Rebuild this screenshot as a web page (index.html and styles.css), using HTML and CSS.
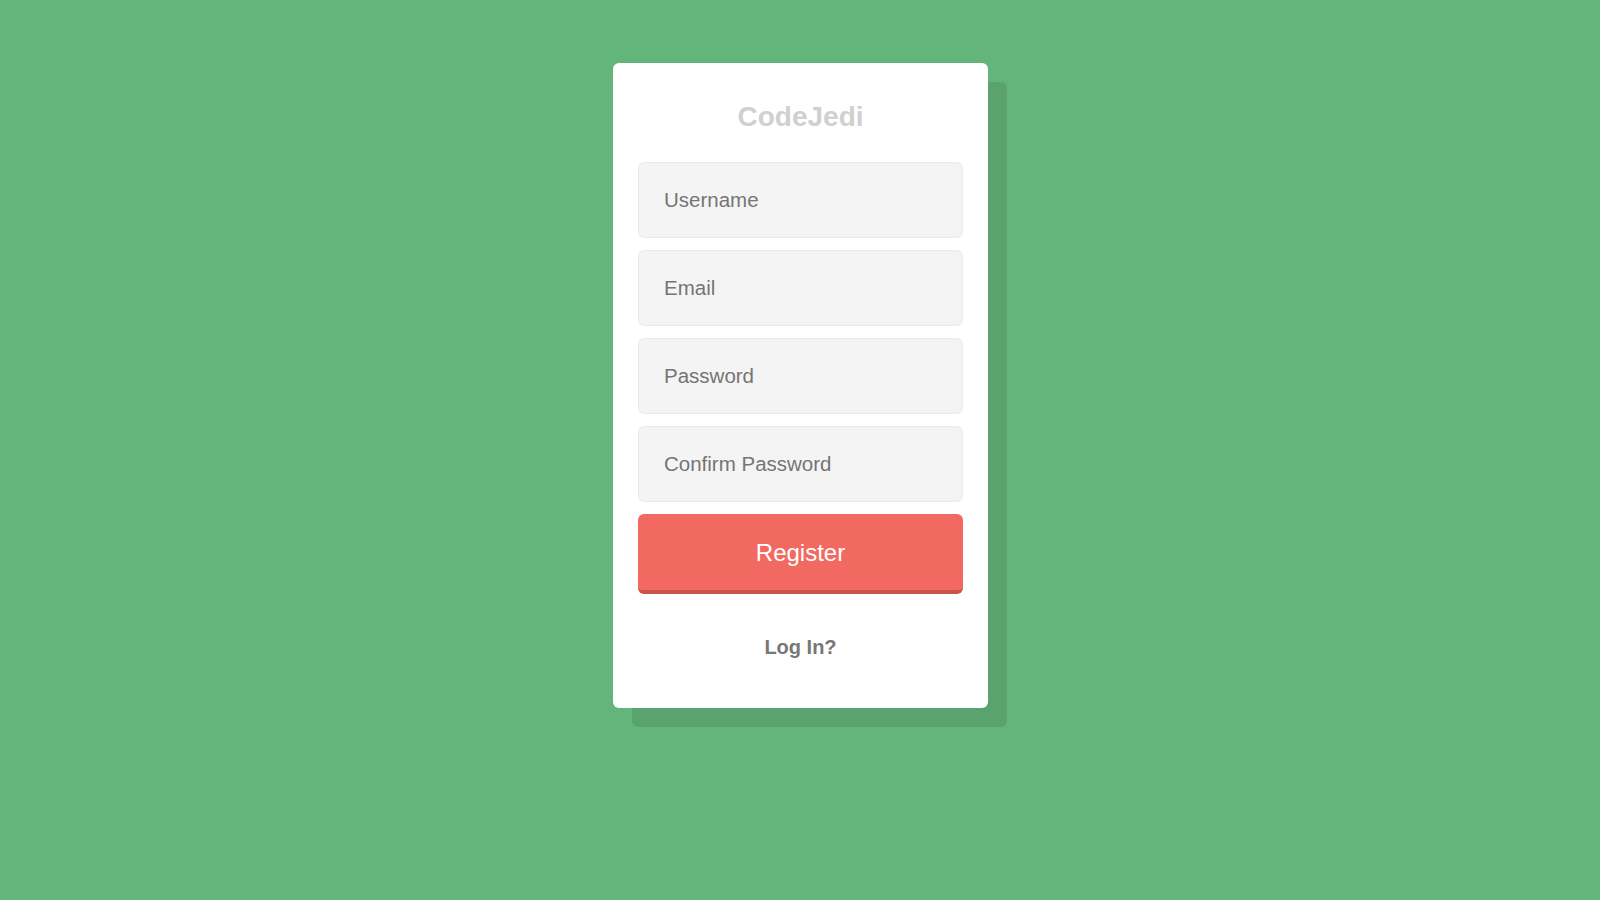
FILE: index.html
```html
<!DOCTYPE html>
<html lang="en">
<head>
<meta charset="utf-8">
<title>CodeJedi - Register</title>
<link rel="stylesheet" href="styles.css">
</head>
<body>
<div class="page">
  <form class="card">
    <h1 class="title">CodeJedi</h1>
    <div class="fields">
      <input class="field" type="text" placeholder="Username">
      <input class="field" type="email" placeholder="Email">
      <input class="field" type="password" placeholder="Password">
      <input class="field" type="password" placeholder="Confirm Password">
      <button class="btn" type="button">Register</button>
    </div>
    <a class="link" href="#">Log In?</a>
  </form>
</div>
</body>
</html>
```
FILE: styles.css
```css
* { box-sizing: border-box; }
html, body {
  margin: 0;
  padding: 0;
  height: 100%;
}
body {
  background: #63b57b;
  font-family: "Liberation Sans", Arial, Helvetica, sans-serif;
}
.page {
  display: flex;
  justify-content: center;
  padding-top: 63px;
  padding-left: 1px;
}
.card {
  width: 375px;
  height: 645px;
  background: #ffffff;
  border-radius: 6px;
  box-shadow: 19px 19px 0 #5aa36f;
  padding: 38px 25px 0;
  display: flex;
  flex-direction: column;
  align-items: stretch;
}
.title {
  margin: 0 0 29px;
  font-size: 28px;
  line-height: 32px;
  font-weight: bold;
  color: #d0d0d0;
  text-align: center;
}
.fields {
  display: flex;
  flex-direction: column;
  gap: 12px;
}
.field {
  display: block;
  width: 100%;
  height: 76px;
  margin: 0;
  padding: 0 25px;
  background: #f4f4f4;
  border: 1px solid #ebebeb;
  border-radius: 6px;
  font-family: inherit;
  font-size: 20.5px;
  color: #555;
  outline: none;
}
.field::placeholder {
  color: #757575;
  opacity: 1;
}
.btn {
  display: block;
  width: 100%;
  height: 80px;
  margin: 0;
  padding: 2px 0 0;
  background: #f26962;
  border: none;
  border-bottom: 4px solid #c9524d;
  border-radius: 6px;
  font-family: inherit;
  font-size: 24px;
  color: #ffffff;
  cursor: pointer;
}
.link {
  display: block;
  margin-top: 42px;
  font-size: 20px;
  line-height: 23px;
  font-weight: bold;
  color: #777777;
  text-align: center;
  text-decoration: none;
}
```
